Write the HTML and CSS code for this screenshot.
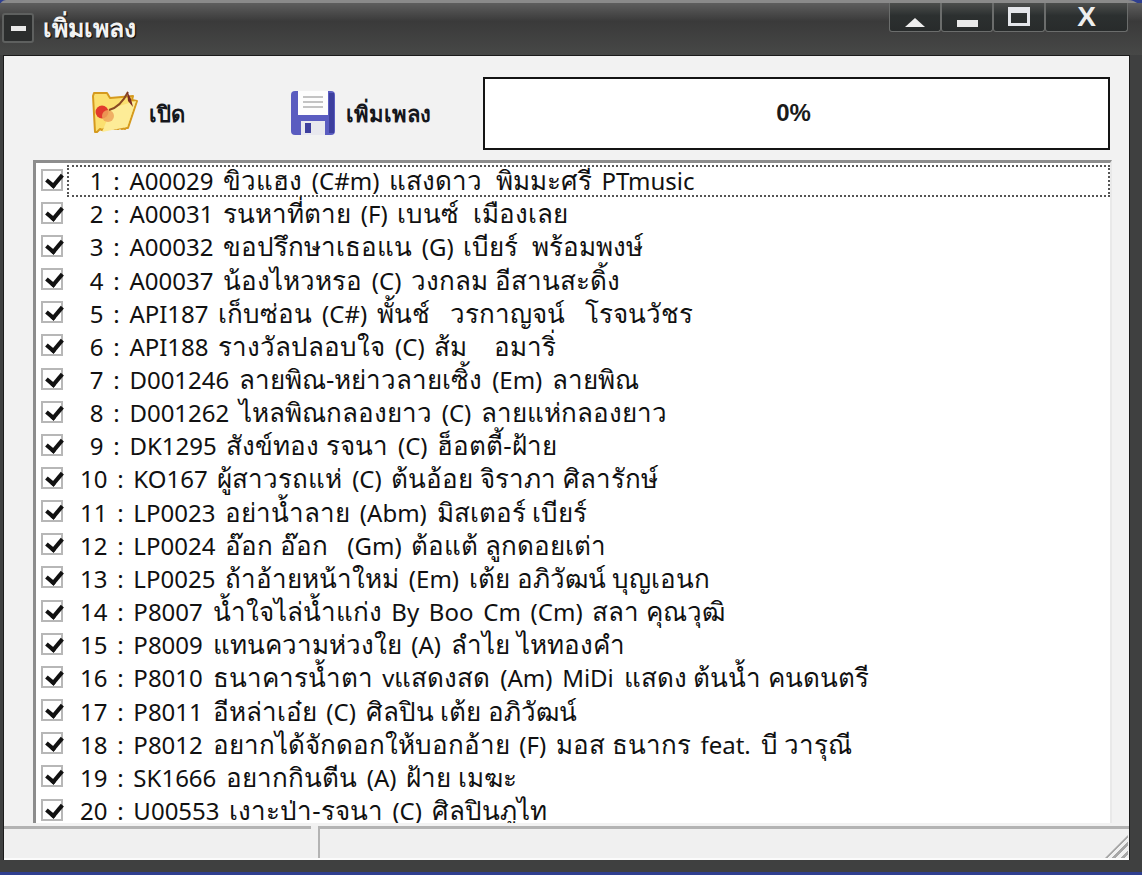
FILE: index.html
```html
<!DOCTYPE html>
<html lang="th">
<head>
<meta charset="utf-8">
<title>เพิ่มเพลง</title>
<link rel="stylesheet" href="styles.css">
</head>
<body>
<div class="window">
  <header class="titlebar">
    <div class="sysbtn"><span class="sysbar"></span></div>
    <div class="title">เพิ่มเพลง</div>
    <div class="caption">
      <div class="capbtn cap-a"><span class="tri"></span></div>
      <div class="capbtn cap-a"><span class="dash"></span></div>
      <div class="capbtn cap-a"><span class="maxi"></span></div>
      <div class="capbtn cap-x">X</div>
    </div>
  </header>
  <main class="client">
    <div class="toolbar">
      <div class="tool tool-open">
        <svg class="ico" width="50" height="50" viewBox="0 0 50 50">
          <path d="M3 8l1-3h13l3 5 23-2-1 4 5 1-9 27-2 0-1 1-2-1-1 1-2-1-2 1-2-1-1 1-2-1-2 1-2-1-1 1-2-1-2 1-2 1-2-1-2 2-1 1-2 0z" fill="#fbe070" stroke="#d59a1e" stroke-width="2" stroke-linejoin="round"/>
          <path d="M12 44l10-24 24-7-9 26z" fill="#fdec97"/>
          <circle cx="12" cy="24" r="6.5" fill="#e23a2c"/>
          <circle cx="18" cy="28" r="6" fill="#eda45a" opacity=".85"/>
          <path d="M19 22c8-2 14-8 19-18" fill="none" stroke="#8a4a22" stroke-width="2"/>
          <path d="M37 3l4 8 2 8-5-6z" fill="#7a2b22"/>
        </svg>
        <span class="tool-label">เปิด</span>
      </div>
      <div class="tool tool-add">
        <svg class="ico" width="46" height="46" viewBox="0 0 46 46">
          <rect x="1" y="1" width="44" height="44" rx="4" fill="#5a5cc0"/>
          <rect x="39" y="3" width="5" height="40" fill="#3d3f9e"/>
          <rect x="8" y="1" width="30" height="24" fill="#fdfdfd"/>
          <path d="M13 7h20M13 12h20M13 17h20" stroke="#c3c3c3" stroke-width="2"/>
          <rect x="11" y="31" width="24" height="14" fill="#e8e8ee"/>
          <rect x="15" y="33" width="6" height="10" fill="#3d3f9e"/>
        </svg>
        <span class="tool-label">เพิ่มเพลง</span>
      </div>
      <div class="progress">0%</div>
    </div>
    <div class="list">
      <div class="row focus"><span class="cb"></span><span class="txt"> 1 : A00029 <span class="t">ขิวแฮง</span> (C#m) <span class="t">แสงดาว  พิมมะศรี</span> PTmusic</span></div>
      <div class="row"><span class="cb"></span><span class="txt"> 2 : A00031 <span class="t">รนหาที่ตาย</span> (F) <span class="t">เบนซ์  เมืองเลย</span></span></div>
      <div class="row"><span class="cb"></span><span class="txt"> 3 : A00032 <span class="t">ขอปรึกษาเธอแน</span> (G) <span class="t">เบียร์  พร้อมพงษ์</span></span></div>
      <div class="row"><span class="cb"></span><span class="txt"> 4 : A00037 <span class="t">น้องไหวหรอ</span> (C) <span class="t">วงกลม อีสานสะดิ้ง</span></span></div>
      <div class="row"><span class="cb"></span><span class="txt"> 5 : API187 <span class="t">เก็บซ่อน</span> (C#) <span class="t">พั้นช์   วรกาญจน์   โรจนวัชร</span></span></div>
      <div class="row"><span class="cb"></span><span class="txt"> 6 : API188 <span class="t">รางวัลปลอบใจ</span> (C) <span class="t">ส้ม    อมาริ่</span></span></div>
      <div class="row"><span class="cb"></span><span class="txt"> 7 : D001246 <span class="t">ลายพิณ-หย่าวลายเซิ้ง</span> (Em) <span class="t">ลายพิณ</span></span></div>
      <div class="row"><span class="cb"></span><span class="txt"> 8 : D001262 <span class="t">ไหลพิณกลองยาว</span> (C) <span class="t">ลายแห่กลองยาว</span></span></div>
      <div class="row"><span class="cb"></span><span class="txt"> 9 : DK1295 <span class="t">สังข์ทอง รจนา</span> (C) <span class="t">ฮ็อตตี้-ฝ้าย</span></span></div>
      <div class="row"><span class="cb"></span><span class="txt">10 : KO167 <span class="t">ผู้สาวรถแห่</span> (C) <span class="t">ต้นอ้อย จิราภา ศิลารักษ์</span></span></div>
      <div class="row"><span class="cb"></span><span class="txt">11 : LP0023 <span class="t">อย่าน้ำลาย</span> (Abm) <span class="t">มิสเตอร์ เบียร์</span></span></div>
      <div class="row"><span class="cb"></span><span class="txt">12 : LP0024 <span class="t">อ๊อก อ๊อก</span>  (Gm) <span class="t">ต้อแต้ ลูกดอยเต่า</span></span></div>
      <div class="row"><span class="cb"></span><span class="txt">13 : LP0025 <span class="t">ถ้าอ้ายหน้าใหม่</span> (Em) <span class="t">เต้ย อภิวัฒน์ บุญเอนก</span></span></div>
      <div class="row"><span class="cb"></span><span class="txt">14 : P8007 <span class="t">น้ำใจไล่น้ำแก่ง</span> By Boo Cm (Cm) <span class="t">สลา คุณวุฒิ</span></span></div>
      <div class="row"><span class="cb"></span><span class="txt">15 : P8009 <span class="t">แทนความห่วงใย</span> (A) <span class="t">ลำไย ไหทองคำ</span></span></div>
      <div class="row"><span class="cb"></span><span class="txt">16 : P8010 <span class="t">ธนาคารน้ำตา</span> v<span class="t">แสดงสด</span> (Am) MiDi <span class="t">แสดง ต้นน้ำ คนดนตรี</span></span></div>
      <div class="row"><span class="cb"></span><span class="txt">17 : P8011 <span class="t">อีหล่าเอ๋ย</span> (C) <span class="t">ศิลปิน เต้ย อภิวัฒน์</span></span></div>
      <div class="row"><span class="cb"></span><span class="txt">18 : P8012 <span class="t">อยากได้จักดอกให้บอกอ้าย</span> (F) <span class="t">มอส ธนากร</span> feat. <span class="t">บี วารุณี</span></span></div>
      <div class="row"><span class="cb"></span><span class="txt">19 : SK1666 <span class="t">อยากกินตีน</span> (A) <span class="t">ฝ้าย เมฆะ</span></span></div>
      <div class="row"><span class="cb"></span><span class="txt">20 : U00553 <span class="t">เงาะป่า-รจนา</span> (C) <span class="t">ศิลปินภูไท</span></span></div>
    </div>
    <footer class="status">
      <div class="panel panel-a"></div>
      <div class="panel panel-b"><span class="grip"></span></div>
    </footer>
  </main>
</div>
</body>
</html>
```

FILE: styles.css
```css
* { box-sizing: border-box; }
html, body { margin: 0; height: 100%; overflow: hidden; background: #2f3f8f; }
body { font-family: "Noto Sans", "Liberation Sans", "DejaVu Sans", sans-serif; color: #111; }

.window {
  width: 1142px;
  height: 872px;
  display: flex;
  flex-direction: column;
  padding: 0 12px 12px 2px;
  background: #3f4040;
  border-radius: 6px 14px 0 0;
  border-top: 3px solid #8a8a8a;
}

.titlebar {
  height: 52px;
  flex: none;
  display: flex;
  align-items: flex-start;
  margin: 0 -12px 0 -2px;
  padding: 0 11px 0 2px;
  background: linear-gradient(#5e5e5e, #3a3a3a 35%, #474847 100%);
}
.sysbtn {
  width: 32px;
  height: 30px;
  margin-top: 10px;
  background: #2b2d2d;
  border: 2px solid #5e605f;
  border-radius: 3px;
  display: flex;
  align-items: center;
  justify-content: center;
}
.sysbar { width: 15px; height: 5px; background: #e9e9e9; }
.title {
  margin: 7px 0 0 9px;
  font-size: 25px;
  line-height: 34px;
  font-weight: 700;
  color: #f2f2f2;
  text-shadow: 1px 1px 1px #000;
}
.caption {
  margin-left: auto;
  margin-right: 3px;
  display: flex;
  height: 29px;
}
.capbtn {
  height: 29px;
  width: 52px;
  background: linear-gradient(#4c4e4d, #2c3030 45%, #282b2b);
  border: 1px solid #6b6d6c;
  border-top: 0;
  border-radius: 0 0 3px 3px;
  display: flex;
  align-items: center;
  justify-content: center;
}
.cap-x {
  width: 83px;
  color: #eee;
  font: 700 28px/26px "Liberation Sans", sans-serif;
}
.tri { width: 0; height: 0; margin-top: 10px; border: 10px solid transparent; border-top: 0; border-bottom: 9px solid #eee; }
.dash { width: 21px; height: 7px; margin-top: 13px; background: #e9e9e9; }
.maxi { width: 22px; height: 19px; margin-top: -2px; border: 3px solid #e4e6ea; border-top-width: 6px; }

.client {
  flex: 1;
  min-height: 0;
  display: flex;
  flex-direction: column;
  margin-left: 1px;
  background: #f2f2f2;
  border: 1px solid #1b1b1b;
  border-bottom: 0;
}

.toolbar {
  height: 104px;
  flex: none;
  display: flex;
  align-items: flex-start;
  padding-top: 21px;
}
.tool { display: flex; align-items: center; height: 72px; }
.tool-open { width: 286px; padding: 0 0 0 86px; gap: 9px; }
.tool-add { width: 193px; gap: 10px; }
.ico { flex: none; }
.tool-label { font-size: 22px; font-weight: 700; line-height: 28px; color: #15171c; }
.progress {
  width: 627px;
  height: 73px;
  background: #fff;
  border: 2px solid #141414;
  display: flex;
  align-items: center;
  justify-content: center;
  padding-right: 6px;
  padding-bottom: 2px;
  font: 700 24px/1 "Liberation Sans", sans-serif;
  color: #1a1a1a;
}

.list {
  flex: 1;
  min-height: 0;
  margin: 0 17px 3px 29px;
  overflow: hidden;
  background: #fff;
  border-top: 3px solid #8d8d8d;
  border-left: 3px solid #8d8d8d;
  border-right: 2px solid #e9e9e9;
}
.row {
  height: 33.16px;
  display: flex;
  align-items: center;
  position: relative;
}
.row.focus::before {
  content: "";
  position: absolute;
  left: 31px;
  right: 0;
  top: 2px;
  bottom: -1px;
  border: 2px dotted #555;
}
.cb {
  flex: none;
  width: 22px;
  height: 22px;
  margin-left: 5px;
  background: #fff;
  border: 2px solid #b7b7b7;
  position: relative;
}
.cb::after {
  content: "";
  position: absolute;
  left: 6px;
  top: 0;
  width: 7px;
  height: 12px;
  border-right: 4px solid #111;
  border-bottom: 4px solid #111;
  transform: rotate(40deg);
}
.txt {
  margin-left: 17px;
  padding-top: 3px;
  white-space: pre;
  font-size: 24px;
  line-height: 30px;
  word-spacing: 3.5px;
  color: #111;
}
.t { font-size: 26px; line-height: 24px; word-spacing: 0; }

.status {
  height: 34px;
  flex: none;
  display: flex;
  background: #f0f0f0;
  border-bottom: 2px solid #fbfbfb;
}
.panel { border-top: 3px solid #b3b3b3; }
.panel-a { width: 307px; }
.panel-b {
  flex: 1;
  margin-left: 7px;
  border-left: 2px solid #b3b3b3;
  position: relative;
}
.grip {
  position: absolute;
  right: 1px;
  bottom: 0;
  width: 23px;
  height: 23px;
  background: repeating-linear-gradient(135deg, transparent 0 3px, #a6a6a6 3px 6px);
  clip-path: polygon(100% 0, 100% 100%, 0 100%);
}
```
